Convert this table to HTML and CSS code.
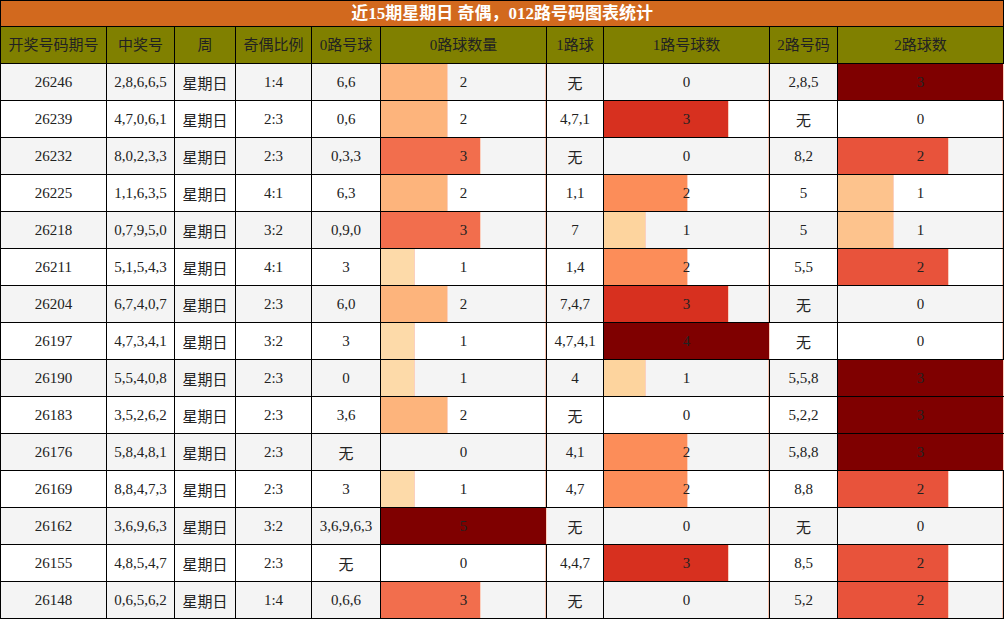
FILE: index.html
```html
<!DOCTYPE html>
<html lang="zh">
<head>
<meta charset="utf-8">
<title>近15期星期日 奇偶，012路号码图表统计</title>
<link rel="stylesheet" href="styles.css">
</head>
<body>
<table class="stats">
<colgroup>
<col class="c-issue"><col class="c-num"><col class="c-week"><col class="c-ratio"><col class="c-r0"><col class="c-bar"><col class="c-r1"><col class="c-bar"><col class="c-r2"><col class="c-bar">
</colgroup>
<thead>
<tr class="title-row"><th colspan="10">近15期星期日 奇偶，012路号码图表统计</th></tr>
<tr class="head-row">
<th>开奖号码期号</th><th>中奖号</th><th>周</th><th>奇偶比例</th><th>0路号球</th><th>0路球数量</th><th>1路球</th><th>1路号球数</th><th>2路号码</th><th>2路球数</th>
</tr>
</thead>
<tbody>
<tr class="odd"><td>26246</td><td>2,8,6,6,5</td><td class="cjk">星期日</td><td>1:4</td><td>6,6</td><td class="barcell"><span class="bar z2" style="width:40%"></span><span class="val">2</span></td><td class="cjk">无</td><td class="barcell"><span class="val">0</span></td><td>2,8,5</td><td class="barcell"><span class="bar t3" style="width:100%"></span><span class="val">3</span></td></tr>
<tr><td>26239</td><td>4,7,0,6,1</td><td class="cjk">星期日</td><td>2:3</td><td>0,6</td><td class="barcell"><span class="bar z2" style="width:40%"></span><span class="val">2</span></td><td>4,7,1</td><td class="barcell"><span class="bar o3" style="width:75%"></span><span class="val">3</span></td><td class="cjk">无</td><td class="barcell"><span class="val">0</span></td></tr>
<tr class="odd"><td>26232</td><td>8,0,2,3,3</td><td class="cjk">星期日</td><td>2:3</td><td>0,3,3</td><td class="barcell"><span class="bar z3" style="width:60%"></span><span class="val">3</span></td><td class="cjk">无</td><td class="barcell"><span class="val">0</span></td><td>8,2</td><td class="barcell"><span class="bar t2" style="width:66.67%"></span><span class="val">2</span></td></tr>
<tr><td>26225</td><td>1,1,6,3,5</td><td class="cjk">星期日</td><td>4:1</td><td>6,3</td><td class="barcell"><span class="bar z2" style="width:40%"></span><span class="val">2</span></td><td>1,1</td><td class="barcell"><span class="bar o2" style="width:50%"></span><span class="val">2</span></td><td>5</td><td class="barcell"><span class="bar t1" style="width:33.33%"></span><span class="val">1</span></td></tr>
<tr class="odd"><td>26218</td><td>0,7,9,5,0</td><td class="cjk">星期日</td><td>3:2</td><td>0,9,0</td><td class="barcell"><span class="bar z3" style="width:60%"></span><span class="val">3</span></td><td>7</td><td class="barcell"><span class="bar o1" style="width:25%"></span><span class="val">1</span></td><td>5</td><td class="barcell"><span class="bar t1" style="width:33.33%"></span><span class="val">1</span></td></tr>
<tr><td>26211</td><td>5,1,5,4,3</td><td class="cjk">星期日</td><td>4:1</td><td>3</td><td class="barcell"><span class="bar z1" style="width:20%"></span><span class="val">1</span></td><td>1,4</td><td class="barcell"><span class="bar o2" style="width:50%"></span><span class="val">2</span></td><td>5,5</td><td class="barcell"><span class="bar t2" style="width:66.67%"></span><span class="val">2</span></td></tr>
<tr class="odd"><td>26204</td><td>6,7,4,0,7</td><td class="cjk">星期日</td><td>2:3</td><td>6,0</td><td class="barcell"><span class="bar z2" style="width:40%"></span><span class="val">2</span></td><td>7,4,7</td><td class="barcell"><span class="bar o3" style="width:75%"></span><span class="val">3</span></td><td class="cjk">无</td><td class="barcell"><span class="val">0</span></td></tr>
<tr><td>26197</td><td>4,7,3,4,1</td><td class="cjk">星期日</td><td>3:2</td><td>3</td><td class="barcell"><span class="bar z1" style="width:20%"></span><span class="val">1</span></td><td>4,7,4,1</td><td class="barcell"><span class="bar o4" style="width:100%"></span><span class="val">4</span></td><td class="cjk">无</td><td class="barcell"><span class="val">0</span></td></tr>
<tr class="odd"><td>26190</td><td>5,5,4,0,8</td><td class="cjk">星期日</td><td>2:3</td><td>0</td><td class="barcell"><span class="bar z1" style="width:20%"></span><span class="val">1</span></td><td>4</td><td class="barcell"><span class="bar o1" style="width:25%"></span><span class="val">1</span></td><td>5,5,8</td><td class="barcell"><span class="bar t3" style="width:100%"></span><span class="val">3</span></td></tr>
<tr><td>26183</td><td>3,5,2,6,2</td><td class="cjk">星期日</td><td>2:3</td><td>3,6</td><td class="barcell"><span class="bar z2" style="width:40%"></span><span class="val">2</span></td><td class="cjk">无</td><td class="barcell"><span class="val">0</span></td><td>5,2,2</td><td class="barcell"><span class="bar t3" style="width:100%"></span><span class="val">3</span></td></tr>
<tr class="odd"><td>26176</td><td>5,8,4,8,1</td><td class="cjk">星期日</td><td>2:3</td><td class="cjk">无</td><td class="barcell"><span class="val">0</span></td><td>4,1</td><td class="barcell"><span class="bar o2" style="width:50%"></span><span class="val">2</span></td><td>5,8,8</td><td class="barcell"><span class="bar t3" style="width:100%"></span><span class="val">3</span></td></tr>
<tr><td>26169</td><td>8,8,4,7,3</td><td class="cjk">星期日</td><td>2:3</td><td>3</td><td class="barcell"><span class="bar z1" style="width:20%"></span><span class="val">1</span></td><td>4,7</td><td class="barcell"><span class="bar o2" style="width:50%"></span><span class="val">2</span></td><td>8,8</td><td class="barcell"><span class="bar t2" style="width:66.67%"></span><span class="val">2</span></td></tr>
<tr class="odd"><td>26162</td><td>3,6,9,6,3</td><td class="cjk">星期日</td><td>3:2</td><td>3,6,9,6,3</td><td class="barcell"><span class="bar z5" style="width:100%"></span><span class="val">5</span></td><td class="cjk">无</td><td class="barcell"><span class="val">0</span></td><td class="cjk">无</td><td class="barcell"><span class="val">0</span></td></tr>
<tr><td>26155</td><td>4,8,5,4,7</td><td class="cjk">星期日</td><td>2:3</td><td class="cjk">无</td><td class="barcell"><span class="val">0</span></td><td>4,4,7</td><td class="barcell"><span class="bar o3" style="width:75%"></span><span class="val">3</span></td><td>8,5</td><td class="barcell"><span class="bar t2" style="width:66.67%"></span><span class="val">2</span></td></tr>
<tr class="odd"><td>26148</td><td>0,6,5,6,2</td><td class="cjk">星期日</td><td>1:4</td><td>0,6,6</td><td class="barcell"><span class="bar z3" style="width:60%"></span><span class="val">3</span></td><td class="cjk">无</td><td class="barcell"><span class="val">0</span></td><td>5,2</td><td class="barcell"><span class="bar t2" style="width:66.67%"></span><span class="val">2</span></td></tr>
</tbody>
</table>
</body>
</html>
```

FILE: styles.css
```css
html, body {
  margin: 0;
  padding: 0;
  background: #ffffff;
}

.stats {
  border-collapse: collapse;
  table-layout: fixed;
  width: 1004px;
  font-family: "Liberation Serif", "Noto Sans CJK SC", serif;
  font-size: 15px;
  line-height: 18px;
  color: #222;
}

.c-issue { width: 106px; }
.c-num { width: 68px; }
.c-week { width: 61px; }
.c-ratio { width: 76px; }
.c-r0 { width: 69px; }
.c-r1 { width: 57px; }
.c-r2 { width: 68px; }
.c-bar { width: 166px; }

.stats th,
.stats td {
  border: 1px solid #000;
  padding: 0;
  text-align: center;
  vertical-align: middle;
  white-space: nowrap;
}

.title-row th {
  background: #d2691e;
  color: #fff;
  font-weight: bold;
  font-size: 17px;
  height: 25px;
  line-height: 20px;
}

.head-row th {
  background: #808000;
  color: #222;
  font-weight: normal;
  font-size: 15px;
  height: 36px;
  line-height: 20px;
}

.stats tbody td {
  height: 37px;
  box-sizing: border-box;
  background: #ffffff;
}

.stats tbody tr.odd td {
  background: #f4f4f4;
}

.stats td.cjk {
  font-size: 15px;
  padding-top: 3px;
}

.stats td.barcell {
  position: relative;
  box-shadow: inset -1px 0 0 #f7c2ad;
}

.bar {
  position: absolute;
  left: 0;
  top: 0;
  bottom: 0;
  box-shadow: 1px 0 0 #fbd0c0;
}

.val {
  position: relative;
}

.z1 { background: #fddaa9; }
.z2 { background: #fdb47c; }
.z3 { background: #f26e4d; }
.z5 { background: #7f0000; }

.o1 { background: #fdd49e; }
.o2 { background: #fc8d59; }
.o3 { background: #d7301f; }
.o4 { background: #7f0000; }

.t1 { background: #fdc38d; }
.t2 { background: #e8533b; }
.t3 { background: #7f0000; }
```
